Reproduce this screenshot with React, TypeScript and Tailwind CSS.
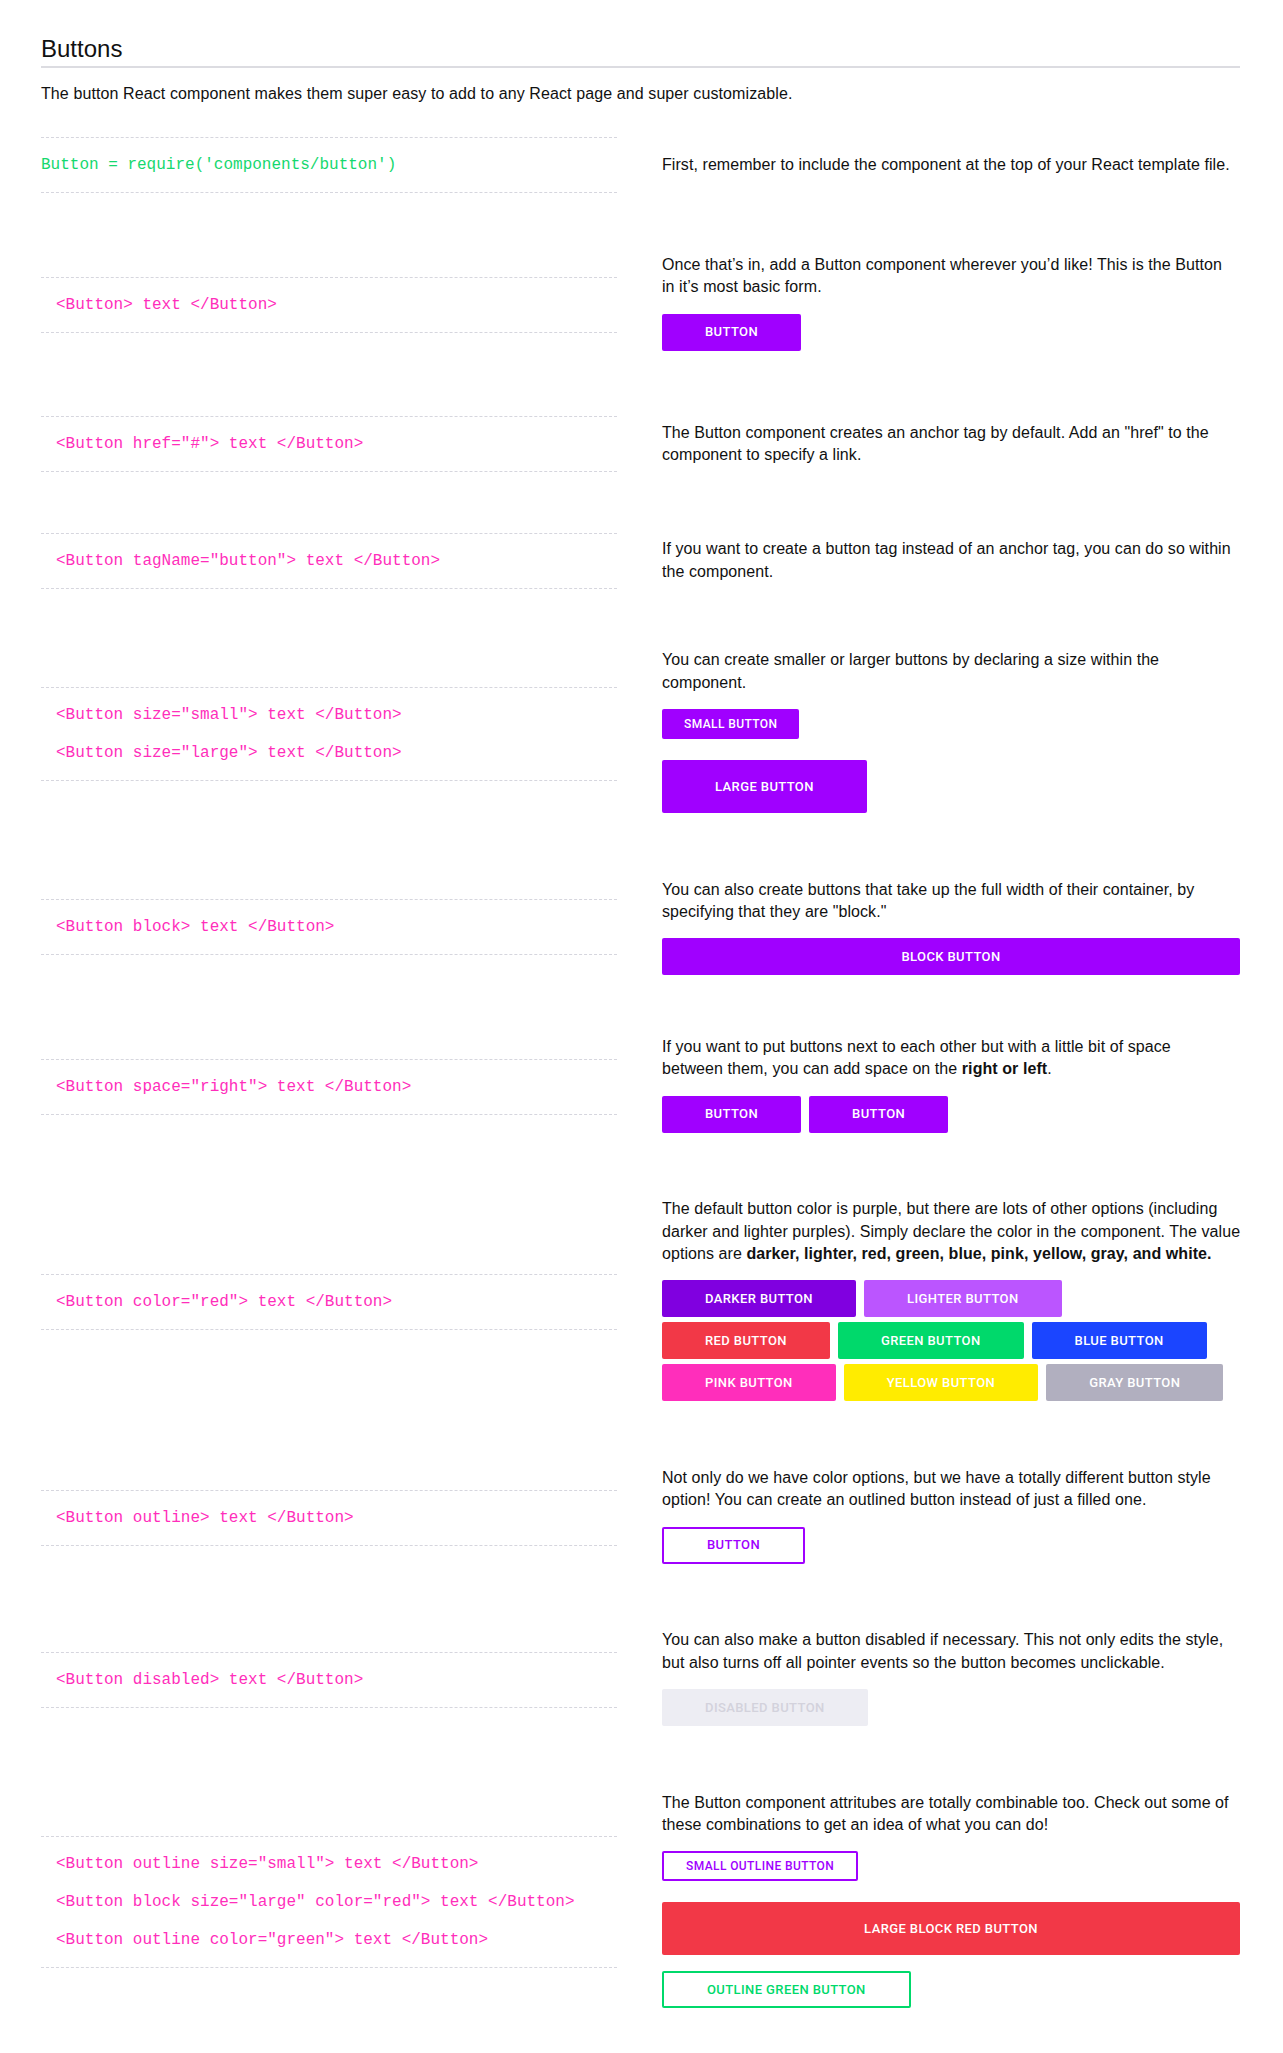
import React from 'react';

type ButtonColor = 'purple' | 'darker' | 'lighter' | 'red' | 'green' | 'blue' | 'pink' | 'yellow' | 'gray';

interface ButtonProps {
  children: React.ReactNode;
  color?: ButtonColor;
  size?: 'small' | 'large';
  outline?: boolean;
  block?: boolean;
  disabled?: boolean;
  className?: string;
}

const fills: Record<ButtonColor, string> = {
  purple: 'bg-[#a000ff] text-white',
  darker: 'bg-[#8000e0] text-white',
  lighter: 'bg-[#bb55ff] text-white',
  red: 'bg-[#f23847] text-white',
  green: 'bg-[#00d96b] text-white',
  blue: 'bg-[#1b45ff] text-white',
  pink: 'bg-[#ff2ebb] text-white',
  yellow: 'bg-[#ffec00] text-white',
  gray: 'bg-[#b1afbf] text-white',
};

const outlines: Partial<Record<ButtonColor, string>> = {
  purple: 'border-2 border-[#a000ff] text-[#a000ff] bg-white',
  green: 'border-2 border-[#00d96b] text-[#00d96b] bg-white',
};

const Button: React.FC<ButtonProps> = ({ children, color = 'purple', size, outline, block, disabled, className = '' }) => {
  let sizing = 'h-[37px] px-[43px] text-[13px]';
  if (size === 'small') sizing = 'h-[30px] px-[22px] text-[12px]';
  if (size === 'large') sizing = 'h-[53px] px-[53px] text-[13px]';

  let look = outline ? outlines[color] : fills[color];
  if (disabled) look = 'bg-[#ededf3] text-[#d3d2dc] pointer-events-none';

  return (
    <a
      href="#"
      className={`${block ? 'flex w-full' : 'inline-flex'} items-center justify-center rounded-[2px] font-medium uppercase tracking-[0.4px] whitespace-nowrap ${sizing} ${look} ${className}`}
      style={{ fontFamily: 'Roboto, sans-serif' }}
    >
      {children}
    </a>
  );
};

const Row: React.FC<{ code: string[]; green?: boolean; children: React.ReactNode }> = ({ code, green, children }) => (
  <div className="flex items-center">
    <div className="w-[576px] shrink-0 border-y border-dashed border-[#d6d6de] py-2 font-['Liberation_Mono',monospace] text-[16px]">
      {code.map((line) => (
        <div key={line} className={`leading-[38px] whitespace-pre ${green ? 'text-[#15d86e]' : 'pl-[15px] text-[#ff2ebb]'}`}>
          {line}
        </div>
      ))}
    </div>
    <div className="ml-[45px] min-w-0 flex-1">{children}</div>
  </div>
);

// lines are broken by hand, so keep each one on a single line
const Text: React.FC<{ children: React.ReactNode }> = ({ children }) => (
  <p className="whitespace-nowrap text-[16px] leading-[22.4px] tracking-[0.07px] text-[#111]">{children}</p>
);

export default function App() {
  return (
    <div className="bg-white pl-[41px] pr-[43px] pt-[35px] pb-[41px] font-['Liberation_Sans',Arial,sans-serif] text-[#111]">
      {/* Header */}
      <h1 className="border-b-2 border-[#dcdce1] pb-[3px] text-[24px] leading-[28px] font-normal">Buttons</h1>
      <p className="mt-[15px] text-[16px] leading-[22.4px] tracking-[0.1px]">
        The button React component makes them super easy to add to any React page and super customizable.
      </p>

      <div className="mt-[32px] flex flex-col gap-[60.5px]">
        <Row code={["Button = require('components/button')"]} green>
          <Text>First, remember to include the component at the top of your React template file.</Text>
        </Row>

        <Row code={['<Button> text </Button>']}>
          <Text>
            Once that’s in, add a Button component wherever you’d like! This is the Button
            <br />
            in it’s most basic form.
          </Text>
          <div className="mt-[15px]">
            <Button className="mb-[5px]">Button</Button>
          </div>
        </Row>

        <Row code={['<Button href="#"> text </Button>']}>
          <Text>
            The Button component creates an anchor tag by default. Add an "href" to the
            <br />
            component to specify a link.
          </Text>
        </Row>

        <Row code={['<Button tagName="button"> text </Button>']}>
          <Text>
            If you want to create a button tag instead of an anchor tag, you can do so within
            <br />
            the component.
          </Text>
        </Row>

        <Row code={['<Button size="small"> text </Button>', '<Button size="large"> text </Button>']}>
          <Text>
            You can create smaller or larger buttons by declaring a size within the
            <br />
            component.
          </Text>
          <div className="mt-[15px] flex flex-col items-start">
            <Button size="small">Small Button</Button>
            <Button size="large" className="mt-[21px] mb-[5px]">
              Large Button
            </Button>
          </div>
        </Row>

        <Row code={['<Button block> text </Button>']}>
          <Text>
            You can also create buttons that take up the full width of their container, by
            <br />
            specifying that they are "block."
          </Text>
          <div className="mt-[15px]">
            <Button block>Block Button</Button>
          </div>
        </Row>

        <Row code={['<Button space="right"> text </Button>']}>
          <Text>
            If you want to put buttons next to each other but with a little bit of space
            <br />
            between them, you can add space on the <b>right or left</b>.
          </Text>
          <div className="mt-[15px] flex gap-[8px]">
            <Button className="mb-[5px]">Button</Button>
            <Button className="mb-[5px]">Button</Button>
          </div>
        </Row>

        <Row code={['<Button color="red"> text </Button>']}>
          <Text>
            The default button color is purple, but there are lots of other options (including
            <br />
            darker and lighter purples). Simply declare the color in the component. The value
            <br />
            options are <b>darker, lighter, red, green, blue, pink, yellow, gray, and white.</b>
          </Text>
          <div className="mt-[15px] flex flex-col">
            <div className="flex gap-[8px]">
              <Button color="darker" className="mb-[5px]">Darker Button</Button>
              <Button color="lighter" className="mb-[5px]">Lighter Button</Button>
            </div>
            <div className="flex gap-[8px]">
              <Button color="red" className="mb-[5px]">Red Button</Button>
              <Button color="green" className="mb-[5px]">Green Button</Button>
              <Button color="blue" className="mb-[5px]">Blue Button</Button>
            </div>
            <div className="flex gap-[8px]">
              <Button color="pink" className="mb-[5px]">Pink Button</Button>
              <Button color="yellow" className="mb-[5px]">Yellow Button</Button>
              <Button color="gray" className="mb-[5px]">Gray Button</Button>
            </div>
          </div>
        </Row>

        <Row code={['<Button outline> text </Button>']}>
          <Text>
            Not only do we have color options, but we have a totally different button style
            <br />
            option! You can create an outlined button instead of just a filled one.
          </Text>
          <div className="mt-[15px]">
            <Button outline className="mb-[5px]">Button</Button>
          </div>
        </Row>

        <Row code={['<Button disabled> text </Button>']}>
          <Text>
            You can also make a button disabled if necessary. This not only edits the style,
            <br />
            but also turns off all pointer events so the button becomes unclickable.
          </Text>
          <div className="mt-[15px]">
            <Button disabled className="mb-[5px]">Disabled Button</Button>
          </div>
        </Row>

        <Row
          code={[
            '<Button outline size="small"> text </Button>',
            '<Button block size="large" color="red"> text </Button>',
            '<Button outline color="green"> text </Button>',
          ]}
        >
          <Text>
            The Button component attritubes are totally combinable too. Check out some of
            <br />
            these combinations to get an idea of what you can do!
          </Text>
          <div className="mt-[15px] flex flex-col items-start">
            <Button outline size="small">Small Outline Button</Button>
            <Button block size="large" color="red" className="mt-[21px]">
              Large Block Red Button
            </Button>
            <Button outline color="green" className="mt-[16px] mb-[5px]">
              Outline Green Button
            </Button>
          </div>
        </Row>
      </div>
    </div>
  );
}
